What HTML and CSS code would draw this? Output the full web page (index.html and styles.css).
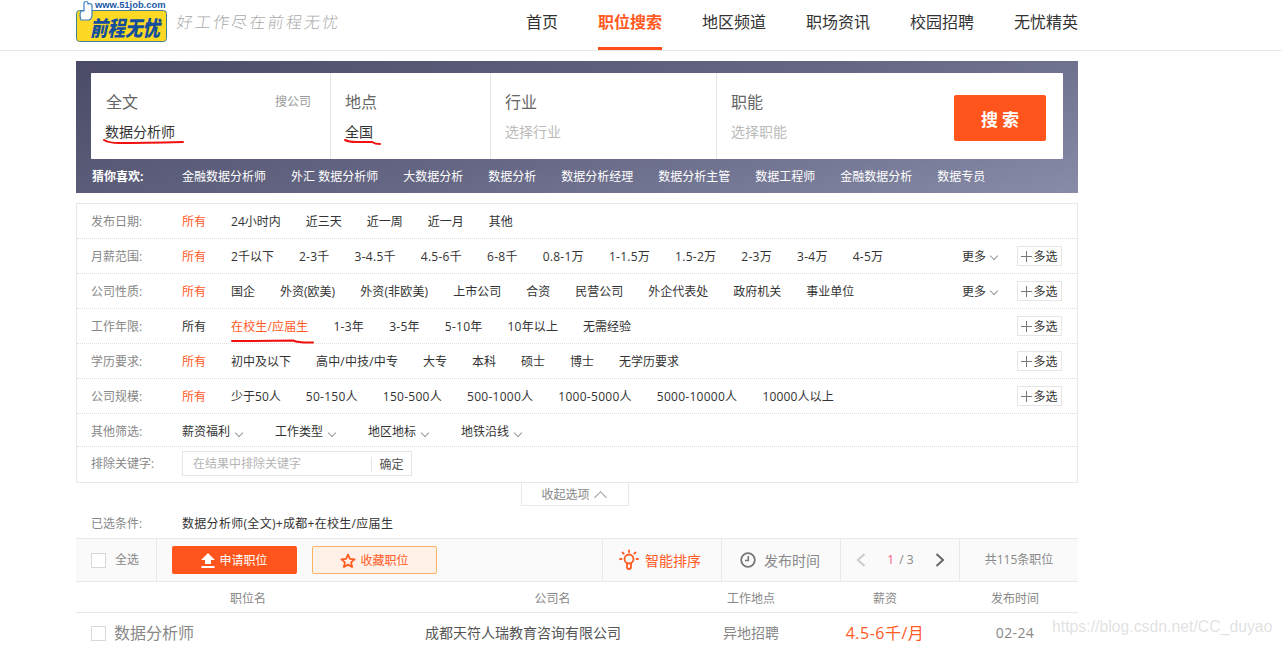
FILE: index.html
```html
<!DOCTYPE html>
<html lang="zh">
<head>
<meta charset="utf-8">
<title>前程无忧</title>
<link rel="stylesheet" href="styles.css">
</head>
<body>
<header class="top">
  <div class="wrap top-in">
    <a class="brand">
      <svg class="logo" width="92" height="42" viewBox="0 0 92 42">
        <rect x="0.5" y="10.5" width="90" height="31" rx="3" fill="#fdd925" stroke="#3f7f8f"/>
        <text x="19" y="8" class="logo-url">www.51job.com</text>
        <path d="M5 20 Q3 15 5 11 L8 11 L8 3 Q8 1.500 10 1.500 Q12 1.500 12 3 V4 Q15 3 16 5 V15 Q16 19 13 20 Z" fill="#fff" stroke="#3b7fc4" stroke-width="1.200"/>
        <text class="logo-name" transform="translate(14 35.500) scale(1 1.200)">前程无忧</text>
      </svg>
      <span class="slogan">好工作尽在前程无忧</span>
    </a>
    <nav class="nav">
      <a>首页</a><a class="on">职位搜索</a><a>地区频道</a><a>职场资讯</a><a>校园招聘</a><a>无忧精英</a>
    </nav>
  </div>
</header>

<main class="wrap">
  <section class="hero">
    <div class="sbox">
      <div class="field f1">
        <div class="f-head"><span class="f-label">全文</span><span class="f-link">搜公司</span></div>
        <div class="f-val dark shift">数据分析师</div>
        <svg class="scribble s1" width="82" height="8" viewBox="0 0 82 8"><path d="M1 2 Q6 5 16 5 Q40 5 80 4" fill="none" stroke="#f01010" stroke-width="2" stroke-linecap="round"/></svg>
      </div>
      <div class="field f2">
        <div class="f-head"><span class="f-label">地点</span></div>
        <div class="f-val dark">全国</div>
        <svg class="scribble s2" width="38" height="9" viewBox="0 0 38 9"><path d="M1 2 Q5 4 12 4 Q22 4 28 4 Q31 6 36 6" fill="none" stroke="#f01010" stroke-width="2" stroke-linecap="round"/></svg>
      </div>
      <div class="field f3">
        <div class="f-head"><span class="f-label">行业</span></div>
        <div class="f-val">选择行业</div>
      </div>
      <div class="field f4">
        <div class="f-head"><span class="f-label">职能</span></div>
        <div class="f-val">选择职能</div>
      </div>
      <button class="sbtn">搜 索</button>
    </div>
    <div class="guess">
      <b>猜你喜欢:</b>
      <a>金融数据分析师</a><a>外汇 数据分析师</a><a>大数据分析</a><a>数据分析</a><a>数据分析经理</a><a>数据分析主管</a><a>数据工程师</a><a>金融数据分析</a><a>数据专员</a>
    </div>
  </section>

  <section class="filters">
    <div class="row"><span class="lbl">发布日期:</span><div class="opts"><a class="hot">所有</a><a>24小时内</a><a>近三天</a><a>近一周</a><a>近一月</a><a>其他</a></div></div>
    <div class="row"><span class="lbl">月薪范围:</span><div class="opts"><a class="hot">所有</a><a>2千以下</a><a class="num">2-3千</a><a class="num">3-4.5千</a><a class="num">4.5-6千</a><a class="num">6-8千</a><a class="num">0.8-1万</a><a class="num">1-1.5万</a><a class="num">1.5-2万</a><a class="num">2-3万</a><a class="num">3-4万</a><a class="num">4-5万</a></div>
      <a class="more">更多<i class="chev"></i></a><a class="multi"><i class="plus"></i>多选</a></div>
    <div class="row"><span class="lbl">公司性质:</span><div class="opts"><a class="hot">所有</a><a>国企</a><a>外资(欧美)</a><a class="fine">外资(非欧美)</a><a>上市公司</a><a>合资</a><a>民营公司</a><a>外企代表处</a><a>政府机关</a><a>事业单位</a></div>
      <a class="more">更多<i class="chev"></i></a><a class="multi"><i class="plus"></i>多选</a></div>
    <div class="row"><span class="lbl">工作年限:</span><div class="opts"><a>所有</a><a class="hot fine">在校生/应届生<svg class="scribble s3" width="84" height="6" viewBox="0 0 84 6"><path d="M1 2 Q30 2 62 1.500 Q68 4 82 3.500" fill="none" stroke="#f01010" stroke-width="2" stroke-linecap="round"/></svg></a><a class="num">1-3年</a><a class="num">3-5年</a><a class="num">5-10年</a><a class="fine">10年以上</a><a>无需经验</a></div>
      <a class="multi"><i class="plus"></i>多选</a></div>
    <div class="row"><span class="lbl">学历要求:</span><div class="opts"><a class="hot">所有</a><a>初中及以下</a><a class="fine">高中/中技/中专</a><a>大专</a><a>本科</a><a>硕士</a><a>博士</a><a>无学历要求</a></div>
      <a class="multi"><i class="plus"></i>多选</a></div>
    <div class="row"><span class="lbl">公司规模:</span><div class="opts"><a class="hot">所有</a><a>少于50人</a><a class="num">50-150人</a><a class="num">150-500人</a><a class="num">500-1000人</a><a class="num">1000-5000人</a><a class="num">5000-10000人</a><a class="fine">10000人以上</a></div>
      <a class="multi"><i class="plus"></i>多选</a></div>
    <div class="row other"><span class="lbl">其他筛选:</span><div class="opts drops"><a>薪资福利<i class="chev"></i></a><a>工作类型<i class="chev"></i></a><a>地区地标<i class="chev"></i></a><a>地铁沿线<i class="chev"></i></a></div></div>
    <div class="row exclude"><span class="lbl">排除关键字:</span>
      <div class="kw"><span class="kw-ph">在结果中排除关键字</span><span class="kw-ok">确定</span></div>
    </div>
  </section>
  <div class="collapse-line"><a class="collapse">收起选项<i class="chev up"></i></a></div>

  <div class="chosen"><span class="lbl">已选条件:</span><span class="chosen-val">数据分析师(全文)+成都+在校生/应届生</span></div>

  <div class="bar">
    <div class="bar-all"><i class="cb"></i><span>全选</span></div>
    <div class="bar-btns">
      <a class="btn apply"><svg width="14" height="15" viewBox="0 0 14 15"><path d="M7 0 L14 7 H10 V11 H4 V7 H0 Z" fill="#fff"/><rect x="0.500" y="13" width="13" height="2" fill="#fff"/></svg>申请职位</a>
      <a class="btn fav"><svg width="16" height="16" viewBox="0 0 16 16"><path d="M8 1.500 L9.900 5.800 L14.600 6.300 L11.100 9.400 L12.100 14 L8 11.600 L3.900 14 L4.900 9.400 L1.400 6.300 L6.100 5.800 Z" fill="none" stroke="#ff5a1f" stroke-width="1.800" stroke-linejoin="round"/></svg>收藏职位</a>
    </div>
    <a class="tab smart"><svg width="20" height="22" viewBox="0 0 20 22"><g fill="none" stroke="#ff5a1f" stroke-width="1.800" stroke-linecap="round"><circle cx="10" cy="10" r="4.500"/><path d="M8 14.500 V18 Q8 20 10 20 Q12 20 12 18 V14.500"/><path d="M10 1.500 V3 M3.500 3.500 L4.700 4.700 M16.500 3.500 L15.300 4.700 M1 10 H2.500 M17.500 10 H19"/></g></svg>智能排序</a>
    <a class="tab time"><svg width="16" height="16" viewBox="0 0 16 16"><circle cx="8" cy="8" r="6.800" fill="none" stroke="#777" stroke-width="1.800"/><path d="M8.300 4 V8.500 H5" fill="none" stroke="#777" stroke-width="1.600"/></svg>发布时间</a>
    <div class="pager">
      <svg width="10" height="14" viewBox="0 0 10 14"><path d="M8.500 1 L2 7 L8.500 13" fill="none" stroke="#ccc" stroke-width="2"/></svg>
      <span class="pg"><b>1</b> / 3</span>
      <svg width="10" height="14" viewBox="0 0 10 14"><path d="M1.500 1 L8 7 L1.500 13" fill="none" stroke="#666" stroke-width="2"/></svg>
    </div>
    <div class="total">共115条职位</div>
  </div>

  <div class="thead"><span class="c-name">职位名</span><span class="c-co">公司名</span><span class="c-loc">工作地点</span><span class="c-pay">薪资</span><span class="c-date">发布时间</span></div>
  <div class="trow">
    <span class="c-name job"><i class="cb"></i>数据分析师</span>
    <span class="c-co co">成都天符人瑞教育咨询有限公司</span>
    <span class="c-loc loc">异地招聘</span>
    <span class="c-pay pay">4.5-6千/月</span>
    <span class="c-date date">02-24</span>
  </div>
</main>
<div class="watermark">https://blog.csdn.net/CC_duyao</div>
</body>
</html>
```
FILE: styles.css
```css
* { box-sizing: border-box; }
html, body { margin: 0; height: 645px; overflow: hidden; background: #fff; }
body { font: 12px/1.5 "Open Sans", "Noto Sans CJK SC", sans-serif; color: #333; position: relative; }
a { color: inherit; text-decoration: none; }
i, em { font-style: normal; }
.wrap { width: 1002px; margin-left: 76px; }

.top { height: 51px; border-bottom: 1px solid #e8e8e8; }
.top-in { display: flex; justify-content: space-between; height: 50px; }
.brand { display: flex; align-items: flex-start; }
.logo { display: block; flex: none; }
.logo-url { font: bold 9.400px "Liberation Sans", sans-serif; fill: #1c5aa6; }
.logo-name { font: italic 900 17.500px "Noto Sans CJK SC", sans-serif; fill: #134f9c; }
.slogan { margin: 9px 0 0 9px; font: 200 16px/24px "Noto Sans CJK SC", sans-serif; color: #aaa; letter-spacing: 2.200px; transform: skewX(-8deg); }
.nav { display: flex; gap: 40px; }
.nav a { font-size: 16px; line-height: 45px; height: 50px; color: #333; }
.nav a.on { color: #ff5a1f; font-weight: 700; border-bottom: 3px solid #ff4e1a; }

.hero { margin-top: 10px; height: 132px; padding: 12px 15px 0; background: linear-gradient(165deg, #4b4b67 0%, #666885 55%, #888ca8 100%); }
.sbox { height: 86px; background: #fff; display: flex; align-items: flex-start; border-radius: 1px; position: relative; }
.field { height: 86px; padding: 17px 15px 0 14px; border-right: 1px solid #e4e4e4; position: relative; }
.f1 { width: 240px; padding-left: 15px; }
.f2 { width: 160px; }
.f3 { width: 226px; }
.f4 { width: 223px; border-right: 0; }
.f-head { display: flex; justify-content: space-between; align-items: center; height: 24px; }
.f-label { font-size: 16px; color: #666; }
.f-link { color: #999; position: relative; left: -4px; }
.f-val { margin-top: 8px; font-size: 14px; line-height: 20px; color: #bbb; }
.f-val.dark { color: #333; }
.f-val.shift { margin-left: -1px; }
.scribble { position: absolute; display: block; }
.s1 { left: 12px; top: 65px; }
.s2 { left: 13px; top: 65px; }
.s3 { left: 0; top: 21px; }
.sbtn { width: 92px; height: 46px; margin: 22px 0 0 14px; border: 0; border-radius: 2px; background: #ff551c; color: #fff; font: 700 17px "Noto Sans CJK SC", sans-serif; }

.guess { display: flex; gap: 25px; height: 34px; padding: 2px 0 0 1px; align-items: center; color: #fff; }
.guess b { width: 65px; }

.filters { margin-top: 10px; height: 280px; border: 1px solid #e8e8e8; }
.row { height: 35px; display: flex; align-items: center; padding: 0 15px 0 14px; border-bottom: 1px dotted #ddd; }
.lbl { color: #888; flex: none; width: 91px; padding-top: 2px; }
.opts { display: flex; gap: 25px; flex: 1; padding-top: 2px; }
.opts a { position: relative; white-space: nowrap; }
.num { letter-spacing: .27px; }
.fine { letter-spacing: .15px; }
.hot { color: #ff5a1f; }
.more { margin-right: 18px; display: flex; align-items: center; padding-top: 2px; }
.chev { display: inline-block; width: 6px; height: 6px; border-right: 1px solid #999; border-bottom: 1px solid #999; transform: rotate(45deg); margin: -3px 2px 0 5px; }
.chev.up { transform: rotate(225deg); margin: 4px 0 0 6px; width: 9px; height: 9px; }
.multi { width: 45px; height: 20px; border: 1px solid #e6e6e6; display: flex; align-items: center; justify-content: center; gap: 1px; padding-top: 1px; line-height: 18px; }
.plus { width: 11px; height: 11px; margin-top: -1px; background: linear-gradient(#777, #777) center / 11px 1px no-repeat, linear-gradient(#777, #777) center / 1px 11px no-repeat; }
.row.other { height: 33px; }
.other .lbl, .other .opts { padding-top: 4px; }
.drops { gap: 31px; }
.drops .chev { margin-left: 6px; }
.row.exclude { height: 32px; border-bottom: 0; }
.kw { width: 230px; height: 25px; border: 1px solid #e6e6e6; display: flex; align-items: center; justify-content: space-between; padding: 2px 0 0 10px; }
.kw-ph { color: #b5b5b5; }
.kw-ok { width: 40px; text-align: center; border-left: 1px solid #e6e6e6; line-height: 15px; color: #555; }

.collapse-line { display: flex; justify-content: center; height: 23px; padding-right: 4px; }
.collapse { width: 108px; height: 23px; padding: 2px 4px 0 0; border: 1px solid #e8e8e8; border-top: 0; color: #888; display: flex; align-items: center; justify-content: center; }

.chosen { display: flex; align-items: center; height: 32px; padding: 3px 0 0 15px; }
.chosen .lbl { padding-top: 0; }
.chosen-val { color: #333; letter-spacing: .3px; }

.bar { height: 44px; background: #fafafa; border-top: 1px solid #e8e8e8; border-bottom: 1px solid #e8e8e8; display: flex; align-items: center; }
.cb { display: inline-block; width: 15px; height: 15px; border: 1px solid #d8d8d8; background: #fff; }
.bar-all { width: 81px; height: 100%; border-right: 1px solid #e8e8e8; display: flex; align-items: center; gap: 9px; padding-left: 15px; color: #888; }
.bar-btns { width: 445px; display: flex; gap: 15px; padding-left: 15px; }
.btn { width: 125px; height: 28px; border-radius: 2px; display: flex; align-items: center; justify-content: center; gap: 4px; padding-top: 1px; }
.apply { background: #ff551c; color: #fff; }
.fav { background: #fff1e7; border: 1px solid #ffb266; color: #ff5a1f; }
.tab { width: 119px; height: 100%; border-left: 1px solid #e8e8e8; display: flex; align-items: center; justify-content: center; gap: 6px; font-size: 14px; color: #888; }
.tab.smart { color: #ff5a1f; padding-right: 4px; }
.tab.time { gap: 8px; padding-right: 2px; }
.pager { width: 119px; height: 100%; border-left: 1px solid #e8e8e8; display: flex; align-items: center; justify-content: space-between; padding: 0 14px 0 15px; color: #888; }
.pg { font-size: 12px; }
.pg b { font-weight: 400; color: #ff5a7a; margin-right: 2px; }
.total { flex: 1; height: 100%; border-left: 1px solid #e8e8e8; display: flex; align-items: center; justify-content: center; color: #888; font-size: 12px; }

.thead, .trow { display: grid; grid-template-columns: 343px 267px 130px 138px 122px; align-items: center; }
.thead { height: 31px; padding-top: 4px; border-bottom: 1px solid #e8e8e8; color: #888; }
.thead span, .trow span { text-align: center; }
.thead .c-name { text-align: left; padding-left: 154px; }
.trow { height: 40px; }
.trow .job { text-align: left; display: flex; align-items: center; gap: 8px; padding-left: 15px; font-size: 16px; color: #888; }
.trow .co { text-align: left; padding: 0 0 2px 6px; font-size: 14px; color: #555; }
.loc { font-size: 14px; color: #888; padding-bottom: 2px; }
.pay { font-size: 16px; color: #ff5a1f; letter-spacing: .5px; }
.date { font-size: 14px; color: #888; letter-spacing: .4px; padding-bottom: 2px; }
.watermark { position: absolute; left: 1052px; top: 616px; font: 15.800px/22px "Liberation Sans", sans-serif; color: rgba(150,150,150,.3); white-space: nowrap; }
```
